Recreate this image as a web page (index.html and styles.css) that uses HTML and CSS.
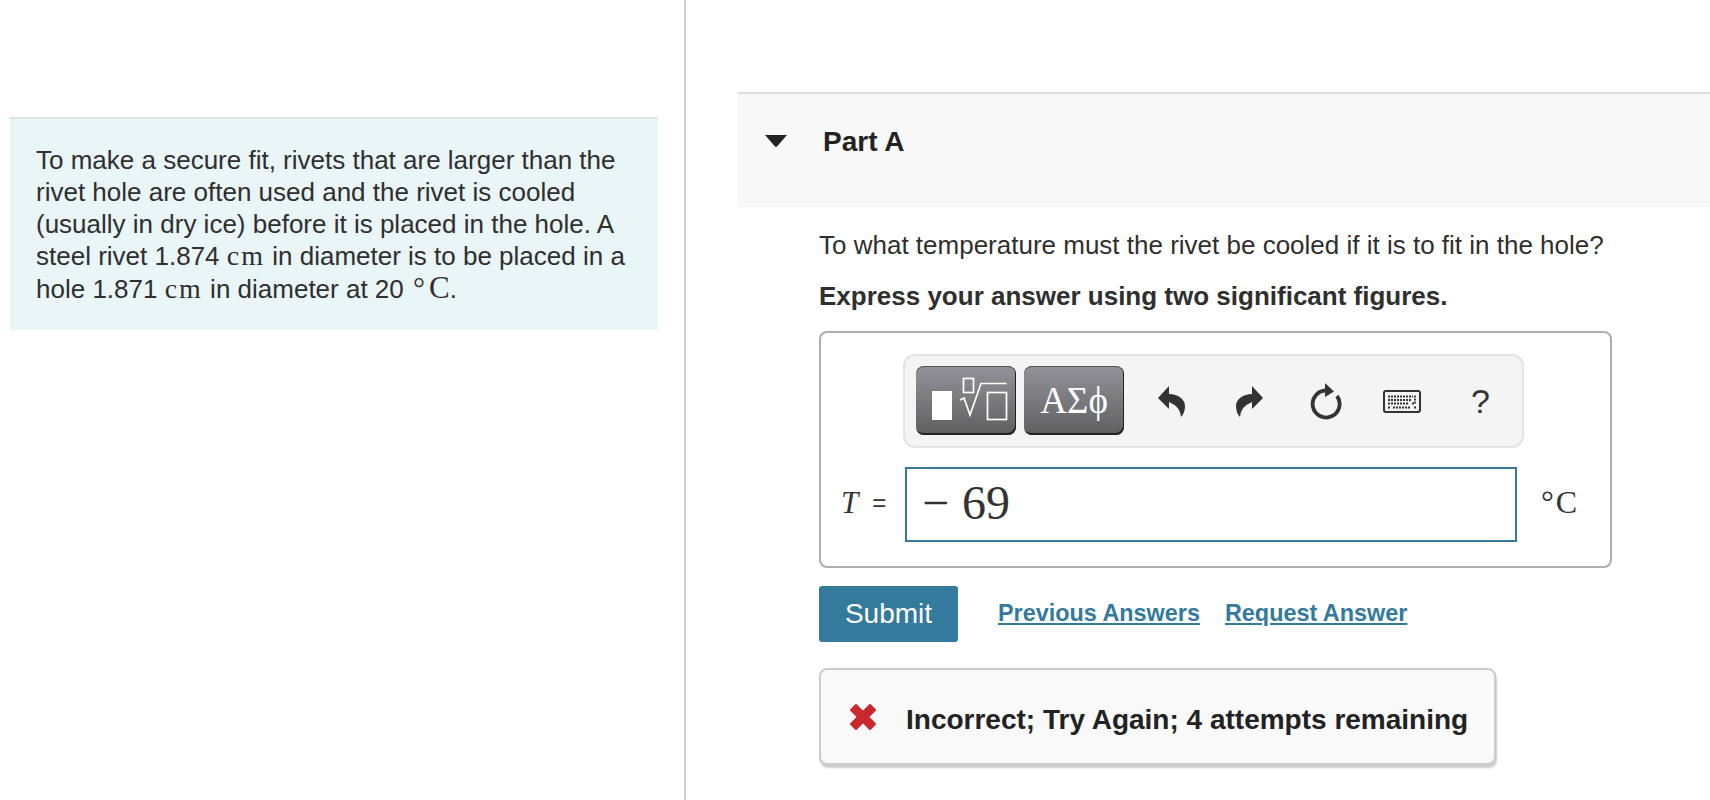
FILE: index.html
```html
<!DOCTYPE html>
<html lang="en">
<head>
<meta charset="utf-8">
<title>Part A</title>
<link rel="stylesheet" href="styles.css">
</head>
<body>
<div class="page">
  <aside class="left">
    <div class="intro">
      <p>To make a secure fit, rivets that are larger than the rivet hole are often used and the rivet is cooled (usually in dry ice) before it is placed in the hole. A steel rivet 1.874 <span class="math">cm</span> in diameter is to be placed in a hole 1.871 <span class="math">cm</span> in diameter at 20 <span class="deg">°</span><span class="big">C</span>.</p>
    </div>
  </aside>
  <main class="right">
    <header class="part-head">
      <svg class="caret" viewBox="0 0 22 12" width="22" height="12"><path d="M0 0H22L12 11.500Q11 12 10 11.500Z"/></svg>
      <h2>Part A</h2>
    </header>
    <section class="part-body">
      <p class="question">To what temperature must the rivet be cooled if it is to fit in the hole?</p>
      <p class="instruction">Express your answer using two significant figures.</p>
      <div class="answer-box">
        <div class="toolbar">
          <div class="tool-btn">
            <svg viewBox="0 0 100 69" width="100" height="69">
              <rect x="16" y="25" width="20" height="29" fill="#fff"/>
              <g fill="none" stroke="#fff" stroke-width="1.700">
                <rect x="47.500" y="12.500" width="10" height="14"/>
                <path d="M44 34L48 32L54 49L65 17.500H90.500"/>
                <rect x="71.500" y="26.500" width="19" height="27"/>
              </g>
            </svg>
          </div>
          <div class="tool-btn greek">ΑΣϕ</div>
          <div class="tool-icons">
            <svg class="ic-undo" viewBox="0 0 27 31" width="27" height="31"><path d="M0 12L11 0V8C20 8 27 13 27 20Q27 27 23 31Q23 21 11 16V23Z" fill="#333"/></svg>
            <svg class="ic-redo" viewBox="0 0 27 31" width="27" height="31"><path d="M27 12L16 0V8C7 8 0 13 0 20Q0 27 4 31Q4 21 16 16V23Z" fill="#333"/></svg>
            <svg class="ic-reset" viewBox="0 0 32 37" width="32" height="37"><path d="M16 7.500A13.500 13.500 0 1 0 27 13" fill="none" stroke="#333" stroke-width="3.800"/><path d="M15 0L24 8.500L15 14Z" fill="#333"/></svg>
            <svg class="ic-keys" viewBox="0 0 38 23" width="38" height="23">
              <rect x="1" y="1" width="36" height="21" rx="2" fill="none" stroke="#333" stroke-width="2"/>
              <path d="M5 6.500H30M5 10H28M32 5.500V13.500H28M5 13.500H25M5 17.500H7M10 17.500H28M31 17.500H33" fill="none" stroke="#333" stroke-width="1.800" stroke-dasharray="2 1"/>
            </svg>
            <span class="help">?</span>
          </div>
        </div>
        <div class="entry-row">
          <span class="var"><i>T</i><span class="eq">=</span></span>
          <div class="entry"><span class="minus">−</span><span>69</span></div>
          <span class="unit"><span class="unit-deg">°</span>C</span>
        </div>
      </div>
      <div class="actions">
        <button class="submit" type="button">Submit</button>
        <a href="#" class="link">Previous Answers</a>
        <a href="#" class="link">Request Answer</a>
      </div>
      <div class="feedback">
        <svg viewBox="0 0 30 30" width="30" height="30"><path d="M3 8L8 3L15 10L22 3L27 8L20 15L27 22L22 27L15 20L8 27L3 22L10 15Z" fill="#c9282d" stroke="#c9282d" stroke-width="2" stroke-linejoin="round"/></svg>
        <strong>Incorrect; Try Again; 4 attempts remaining</strong>
      </div>
    </section>
  </main>
</div>
</body>
</html>
```
FILE: styles.css
```css
* { box-sizing: border-box; }
html, body { margin: 0; height: 100%; background: #fff; }
body { font-family: "Liberation Sans", Arial, sans-serif; color: #2f2f2f; overflow: hidden; }
p { margin: 0; }

.page { display: grid; grid-template-columns: 686px 1fr; height: 800px; }

.left { border-right: 2px solid #c3d3e2; padding: 117px 26px 0 10px; }
.intro { background: #e9f5f7; border-top: 2px solid #dde3e6; height: 213px; padding: 25px 20px 0 26px; font-size: 26px; line-height: 32px; }
.math { font-family: "Liberation Serif", serif; font-size: 28px; line-height: 1; letter-spacing: 2px; }
.big { font-family: "Liberation Serif", serif; font-size: 31px; line-height: 1; }
.deg { font-family: "Liberation Serif", serif; font-size: 30px; line-height: 1; margin: 0 4px 0 2px; }

.right { padding: 92px 0 0 52px; }
.part-head { display: flex; align-items: flex-start; height: 115px; background: #f8f8f8; border-top: 2px solid #ddd; padding: 32px 0 0 27px; }
.caret { margin-top: 9px; fill: #222; }
h2 { margin: 1px 0 0 36px; font-size: 28px; line-height: 30px; font-weight: 700; color: #222; }

.part-body { padding: 21px 98px 0 81px; }
.question { font-size: 26px; line-height: 36px; height: 36px; margin-top: -1px; white-space: nowrap; }
.instruction { font-size: 26px; line-height: 36px; font-weight: 700; margin-top: 15px; white-space: nowrap; }

.answer-box { margin-top: 17px; height: 237px; border: 2px solid #aeaeae; border-radius: 8px; padding: 21px 0 0 0; width: 793px; }
.toolbar { display: flex; align-items: center; margin-left: 82px; width: 621px; height: 94px; background: #f4f4f4; border: 2px solid #e3e3e3; border-radius: 12px; padding: 0 0 0 11px; gap: 8px; }
.tool-btn { width: 100px; height: 69px; margin-bottom: 2px; border-radius: 8px; background: linear-gradient(#94939b, #5f5f5f); box-shadow: inset -1px -2px 0 #222, inset 0 1px 0 #555; display: flex; align-items: center; justify-content: center; color: #fff; }
.tool-btn svg { display: block; }
.greek { font-family: "Liberation Serif", serif; font-size: 37px; }
.tool-icons { display: flex; align-items: center; margin-left: 26px; }
.ic-undo { margin-right: 51px; }
.ic-redo { margin-right: 47px; }
.ic-reset { margin-right: 41px; }
.help { font-size: 34px; color: #333; margin-left: 50px; }

.entry-row { display: flex; align-items: center; margin-top: 19px; height: 75px; }
.var { display: flex; align-items: center; gap: 14px; width: 84px; padding: 0 0 4px 20px; font-family: "Liberation Serif", serif; font-size: 31px; color: #333; white-space: nowrap; }
.eq { font-family: "Liberation Sans", sans-serif; font-size: 24px; }
.entry { width: 612px; height: 75px; border: 2px solid #337a9c; display: flex; align-items: center; padding: 0 0 4px 15px; font-family: "Liberation Serif", serif; font-size: 48px; color: #333; }
.minus { margin-right: 13px; }
.unit { margin-left: 24px; padding-bottom: 4px; font-family: "Liberation Serif", serif; font-size: 32px; color: #333; }
.unit-deg { margin-right: 2px; }

.actions { display: flex; align-items: center; margin-top: 18px; height: 56px; }
.submit { width: 139px; height: 56px; background: #337a9c; color: #fff; border: 0; border-radius: 3px; font: 28px "Liberation Sans", sans-serif; padding: 0; }
.link { font-size: 23.400px; font-weight: 700; color: #337a9c; text-decoration: underline; margin-left: 40px; margin-top: -1px; }
.link + .link { margin-left: 25px; }

.feedback { display: flex; align-items: center; margin-top: 26px; width: 677px; height: 97px; background: #f9f9f9; border: 2px solid #ccc; border-radius: 8px; box-shadow: 1px 3px 2px #ccc; padding: 0 0 0 27px; }
.feedback svg { margin-top: 1px; }
.feedback strong { font-size: 28px; color: #222; margin: 6px 0 0 28px; white-space: nowrap; }
```
